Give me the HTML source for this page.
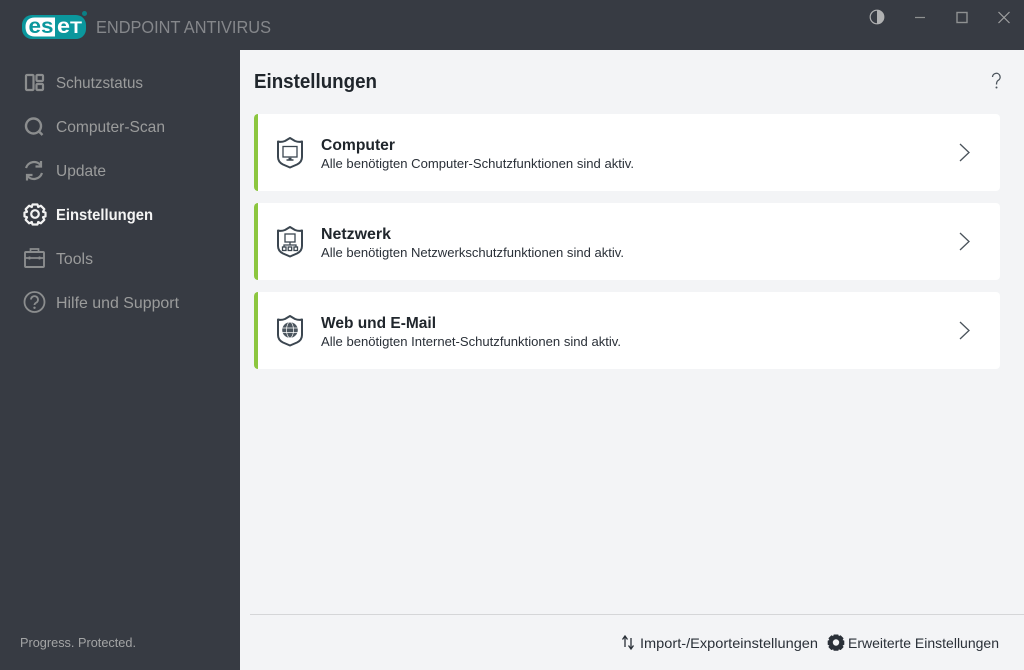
<!DOCTYPE html>
<html lang="de"><head><meta charset="utf-8"><title>ESET Endpoint Antivirus</title>
<style>
html,body{margin:0;padding:0;width:1024px;height:670px;overflow:hidden;background:#373b43}
svg{display:block}
text{font-family:"Liberation Sans",sans-serif}
.n{font-size:16px;fill:#9b9c9c}
.h{font-size:15.5px;font-weight:bold;fill:#20262c}
.s{font-size:12.5px;fill:#2a3038}
.b{font-size:14px;fill:#2a3038}
.ic{fill:none;stroke:#8b8d8e;stroke-width:2.2}
.sh{fill:none;stroke:#3b4650;stroke-width:2;stroke-linejoin:round}
.sh2{fill:none;stroke:#3b4650;stroke-width:1.3}
</style></head><body>
<svg width="1024" height="670" viewBox="0 0 1024 670" xmlns="http://www.w3.org/2000/svg">
<rect width="1024" height="670" fill="#373b43"/>
<rect x="240" y="50" width="784" height="620" fill="#f3f4f6"/>

<!-- logo -->
<rect x="22" y="15" width="64" height="24" rx="10" fill="#0b979d"/>
<path d="M35 17.500H55V36.500H35Q25.500 36.500 25.500 27Q25.500 17.500 35 17.500Z" fill="#fff"/>
<text x="28.500" y="33" font-size="21.500" font-weight="bold" fill="#0b979d" textLength="25" lengthAdjust="spacingAndGlyphs">es</text>
<text x="57" y="33" font-size="21.500" font-weight="bold" fill="#fff" textLength="13" lengthAdjust="spacingAndGlyphs">e</text>
<text x="70" y="33" font-size="16.500" font-weight="bold" fill="#fff" textLength="12" lengthAdjust="spacingAndGlyphs">T</text>
<circle cx="84.500" cy="13.500" r="2.500" fill="#0b7f85"/>
<text x="96" y="33" font-size="17.500" fill="#85878b" textLength="175" lengthAdjust="spacingAndGlyphs">ENDPOINT ANTIVIRUS</text>

<!-- window controls -->
<circle cx="877" cy="17" r="6.800" fill="none" stroke="#b0b1b2" stroke-width="1.200"/>
<path d="M877 10.200A6.800 6.800 0 0 1 877 23.800Z" fill="#b0b1b2"/>
<path d="M915 17.500H925" stroke="#8f9192" stroke-width="1.200"/>
<rect x="957" y="12.500" width="10" height="10" fill="none" stroke="#8f9192" stroke-width="1.400"/>
<path d="M998.500 12L1009.500 23M1009.500 12L998.500 23" stroke="#a0a1a2" stroke-width="1.200"/>

<!-- sidebar icons -->
<g class="ic">
<rect x="26" y="75" width="7.500" height="15" rx="1"/><rect x="36.500" y="75" width="6.500" height="6" rx="1"/><rect x="36.500" y="84" width="6.500" height="6" rx="1"/>
<circle cx="33.500" cy="126" r="7.500" stroke-width="2.400"/><path d="M39 131.500L42.500 135" stroke-width="2.400"/>
<path d="M26 168A8.500 8.500 0 0 1 41 165.500M42 173A8.500 8.500 0 0 1 27 175.500"/>
<path d="M41 161V166.500H35.500M27 180.500V175H32.500"/>
</g>
<circle cx="35" cy="214" r="3.800" fill="none" stroke="#f2f2f2" stroke-width="2.200"/>
<path d="M32.500 204.500H37.500L38.200 207L40.800 205.700L44.300 209.200L43 211.800L45.500 212.500V216.500L43 217.200L44.300 219.800L40.800 223.300L38.200 222L37.500 224.500H32.500L31.800 222L29.200 223.300L25.700 219.800L27 217.200L24.500 216.500V212.500L27 211.800L25.700 209.200L29.200 205.700L31.800 207Z" fill="none" stroke="#f2f2f2" stroke-width="2.200" stroke-linejoin="round"/>
<g class="ic">
<rect x="25" y="252" width="19" height="15" rx="1" stroke-width="1.900"/><path d="M30.500 252V249H38.500V252M25 258H44M29.500 256.500V259.500M39.500 256.500V259.500" stroke-width="1.700"/>
<circle cx="34.500" cy="302" r="10" stroke-width="1.800"/>
<path d="M31 299.500A3.500 3.500 0 1 1 36.500 302.500Q34.500 303.500 34.500 305" stroke-width="1.800"/>
</g>
<circle cx="34.500" cy="307.800" r="1.200" fill="#8b8d8e"/>

<!-- sidebar text -->
<text class="n" x="56" y="88" textLength="87" lengthAdjust="spacingAndGlyphs">Schutzstatus</text>
<text class="n" x="56" y="132" textLength="109" lengthAdjust="spacingAndGlyphs">Computer-Scan</text>
<text class="n" x="56" y="176" textLength="50" lengthAdjust="spacingAndGlyphs">Update</text>
<text x="56" y="220" font-size="16" font-weight="bold" fill="#f4f4f4" textLength="97" lengthAdjust="spacingAndGlyphs">Einstellungen</text>
<text class="n" x="56" y="264" textLength="37" lengthAdjust="spacingAndGlyphs">Tools</text>
<text class="n" x="56" y="308" textLength="123" lengthAdjust="spacingAndGlyphs">Hilfe und Support</text>
<text x="20" y="647" font-size="12.500" fill="#a3a4a5" textLength="116" lengthAdjust="spacingAndGlyphs">Progress. Protected.</text>

<!-- header -->
<text x="254" y="88" font-size="20" font-weight="bold" fill="#20262c" textLength="123" lengthAdjust="spacingAndGlyphs">Einstellungen</text>
<path d="M992.500 77A3.800 3.800 0 1 1 998 80.500Q996.500 81.500 996.500 84.500" fill="none" stroke="#4a535b" stroke-width="1.300"/>
<circle cx="996.500" cy="87.500" r="1" fill="#4a535b"/>

<!-- cards -->
<g>
<rect x="254" y="114" width="746" height="77" rx="4" fill="#fff"/>
<path d="M258 114A4 4 0 0 0 254 118V187A4 4 0 0 0 258 191Z" fill="#8cc63f"/>
<rect x="254" y="203" width="746" height="77" rx="4" fill="#fff"/>
<path d="M258 203A4 4 0 0 0 254 207V276A4 4 0 0 0 258 280Z" fill="#8cc63f"/>
<rect x="254" y="292" width="746" height="77" rx="4" fill="#fff"/>
<path d="M258 292A4 4 0 0 0 254 296V365A4 4 0 0 0 258 369Z" fill="#8cc63f"/>
</g>

<!-- shields -->
<path class="sh" d="M290 138L295 141Q299 142.500 302 141.500V157Q302 162 297 164.500L290 167.500L283 164.500Q278 162 278 157V141.500Q281 142.500 285 141Z"/>
<rect class="sh2" x="283" y="146.500" width="14" height="10.500"/>
<path d="M286.500 160H293.500M288.500 158.500H291.500" stroke="#3b4650" stroke-width="1.600"/>

<path class="sh" d="M290 227L295 230Q299 231.500 302 230.500V246Q302 251 297 253.500L290 256.500L283 253.500Q278 251 278 246V230.500Q281 231.500 285 230Z"/>
<rect class="sh2" x="285" y="234" width="10" height="8"/>
<path class="sh2" d="M290 242V245M284 247V245H296V247"/>
<rect class="sh2" x="282.500" y="247" width="3.500" height="3.500"/><rect class="sh2" x="288.200" y="247" width="3.500" height="3.500"/><rect class="sh2" x="294" y="247" width="3.500" height="3.500"/>

<path class="sh" d="M290 316L295 319Q299 320.500 302 319.500V335Q302 340 297 342.500L290 345.500L283 342.500Q278 340 278 335V319.500Q281 320.500 285 319Z"/>
<circle cx="290" cy="330" r="7.800" fill="#4b555e"/>
<path d="M282.200 328H297.800M282.200 332.500H297.800" stroke="#fff" stroke-width=".7"/>
<ellipse cx="290" cy="330" rx="3.500" ry="7.800" fill="none" stroke="#fff" stroke-width=".7"/>

<!-- card text -->
<text class="h" x="321" y="150" textLength="74" lengthAdjust="spacingAndGlyphs">Computer</text>
<text class="s" x="321" y="168" textLength="313" lengthAdjust="spacingAndGlyphs">Alle benötigten Computer-Schutzfunktionen sind aktiv.</text>
<text class="h" x="321" y="239" textLength="70" lengthAdjust="spacingAndGlyphs">Netzwerk</text>
<text class="s" x="321" y="257" textLength="303" lengthAdjust="spacingAndGlyphs">Alle benötigten Netzwerkschutzfunktionen sind aktiv.</text>
<text class="h" x="321" y="328" textLength="115" lengthAdjust="spacingAndGlyphs">Web und E-Mail</text>
<text class="s" x="321" y="346" textLength="300" lengthAdjust="spacingAndGlyphs">Alle benötigten Internet-Schutzfunktionen sind aktiv.</text>

<!-- chevrons -->
<g fill="none" stroke="#4a535b" stroke-width="1.300">
<path d="M960 144L969 152.500L960 161"/>
<path d="M960 233L969 241.500L960 250"/>
<path d="M960 322L969 330.500L960 339"/>
</g>

<!-- footer -->
<rect x="250" y="614" width="774" height="1" fill="#d5d6d8"/>
<path d="M625 647V637M622.500 639.500L625 636L627.500 639.500M631 638V648M628.500 645.500L631 649L633.500 645.500" fill="none" stroke="#2a3038" stroke-width="1.300"/>
<text class="b" x="640" y="648" textLength="178" lengthAdjust="spacingAndGlyphs">Import-/Exporteinstellungen</text>
<path d="M834 635H838L838.500 636.800L840.500 635.800L843 638.300L842 640.300L843.800 641V644.500L842 645L843 647L840.500 649.500L838.500 648.500L838 650.300H834L833.500 648.500L831.500 649.500L829 647L830 645L828.200 644.500V641L830 640.300L829 638.300L831.500 635.800L833.500 636.800Z" fill="#2a3038" stroke="#2a3038" stroke-width="1" stroke-linejoin="round"/>
<circle cx="836" cy="642.500" r="3.200" fill="#f3f4f6"/>
<text class="b" x="848" y="648" textLength="151" lengthAdjust="spacingAndGlyphs">Erweiterte Einstellungen</text>
</svg>
</body></html>
